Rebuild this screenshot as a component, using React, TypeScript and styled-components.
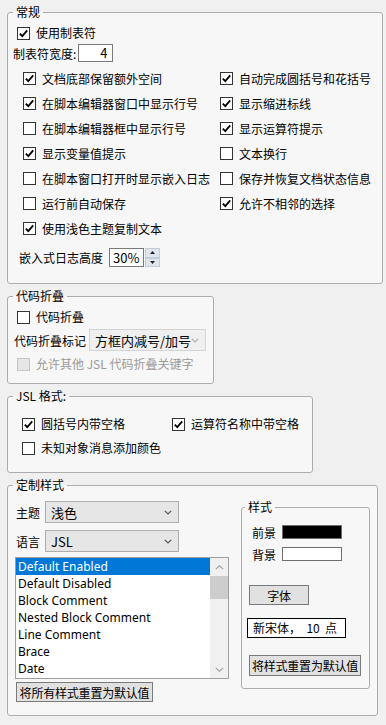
import React from 'react';
import styled, { createGlobalStyle } from 'styled-components';

const GlobalStyle = createGlobalStyle`
  html, body {
    margin: 0;
    padding: 0;
    background: #f0f0f0;
  }
  body {
    font-family: "Noto Sans CJK SC", "Noto Sans", sans-serif;
    font-size: 12px;
    color: #000;
  }
  #root {
    width: 386px;
    height: 725px;
    overflow: hidden;
  }
`;

const Page = styled.div`
  padding-top: 4px;
  display: flex;
  flex-direction: column;
  align-items: flex-start;
`;

const Group = styled.fieldset<{ $width: number; $left?: number; $top?: number }>`
  box-sizing: border-box;
  width: ${p => p.$width}px;
  min-width: 0;
  margin: ${p => p.$top ?? 4}px 0 0 ${p => p.$left ?? 7}px;
  padding: 0;
  border: 1px solid #adadad;
  border-radius: 3px;
  background: #f7f7f7;
`;

const Legend = styled.legend<{ $left?: number }>`
  margin-left: ${p => p.$left ?? 5}px;
  padding: 0 3px;
  font-size: 12px;
  line-height: 16px;
`;

const Body = styled.div<{ $pt: number; $pb: number }>`
  padding: ${p => p.$pt}px 0 ${p => p.$pb}px 0;
  display: flex;
  flex-direction: column;
  align-items: flex-start;
`;

const Row = styled.div<{ $ml?: number; $mt?: number; $gap?: number; $h?: number }>`
  display: flex;
  align-items: center;
  margin-left: ${p => p.$ml ?? 0}px;
  margin-top: ${p => p.$mt ?? 0}px;
  gap: ${p => p.$gap ?? 0}px;
  height: ${p => (p.$h ? `${p.$h}px` : 'auto')};
  white-space: nowrap;
`;

const OptionGrid = styled.div<{ $ml: number; $mt: number; $col: number; $row: number }>`
  display: grid;
  grid-template-columns: ${p => p.$col}px auto;
  grid-auto-rows: ${p => p.$row}px;
  align-items: center;
  margin-left: ${p => p.$ml}px;
  margin-top: ${p => p.$mt}px;
`;

const CheckLabel = styled.label<{ $disabled?: boolean }>`
  display: flex;
  align-items: center;
  gap: 6px;
  height: 16px;
  line-height: 16px;
  white-space: nowrap;
  color: ${p => (p.$disabled ? '#9a9a9a' : '#000')};
`;

const Box = styled.span<{ $disabled?: boolean }>`
  box-sizing: border-box;
  width: 13px;
  height: 13px;
  flex: none;
  border: 1px solid ${p => (p.$disabled ? '#c4c4c4' : '#333')};
  background: ${p => (p.$disabled ? '#e6e6e6' : '#fff')};
  display: flex;
  align-items: center;
  justify-content: center;
`;

const TextField = styled.div<{ $w: number; $h: number; $align?: string }>`
  box-sizing: border-box;
  width: ${p => p.$w}px;
  height: ${p => p.$h}px;
  border: 1px solid #7a7a7a;
  background: #fff;
  line-height: ${p => p.$h - 2}px;
  padding: 0 5px 0 3px;
  text-align: ${p => p.$align ?? 'left'};
  font-size: 13px;
`;

const Spin = styled.div`
  display: flex;
  flex-direction: column;
  width: 15px;
  height: 19px;
  margin-left: 1px;
`;

const SpinButton = styled.div`
  flex: 1;
  box-sizing: border-box;
  border: 1px solid #c3cdd8;
  background: #dfe6ee;
  display: flex;
  align-items: center;
  justify-content: center;
`;

const Select = styled.div<{ $w: number; $disabled?: boolean }>`
  box-sizing: border-box;
  width: ${p => p.$w}px;
  height: 22px;
  border: 1px solid ${p => (p.$disabled ? '#d4d4d4' : '#adadad')};
  background: ${p => (p.$disabled ? '#efefef' : '#e6e6e6')};
  display: flex;
  align-items: center;
  justify-content: space-between;
  padding: 0 6px 0 5px;
  font-size: 13px;
`;

const ListBox = styled.div`
  box-sizing: border-box;
  width: 214px;
  height: 122px;
  margin-top: 5px;
  border: 1px solid #a0a0a0;
  background: #fff;
  display: flex;
  overflow: hidden;
`;

const Items = styled.div`
  flex: 1;
  overflow: hidden;
`;

const Item = styled.div<{ $selected?: boolean }>`
  height: 17px;
  line-height: 17px;
  padding-left: 2px;
  font-family: "Noto Sans", "Open Sans", sans-serif;
  font-size: 12px;
  white-space: nowrap;
  background: ${p => (p.$selected ? '#0078d7' : 'transparent')};
  color: ${p => (p.$selected ? '#fff' : '#000')};
`;

const ScrollBar = styled.div`
  width: 18px;
  background: #f0f0f0;
  display: flex;
  flex-direction: column;
`;

const ScrollArrow = styled.div`
  height: 18px;
  display: flex;
  align-items: center;
  justify-content: center;
`;

const Thumb = styled.div`
  height: 23px;
  background: #cdcdcd;
`;

const Track = styled.div`
  flex: 1;
`;

const Button = styled.div<{ $w: number; $h?: number; $ml?: number; $mt?: number }>`
  box-sizing: border-box;
  width: ${p => p.$w}px;
  height: ${p => p.$h ?? 20}px;
  margin-left: ${p => p.$ml ?? 0}px;
  margin-top: ${p => p.$mt ?? 0}px;
  border: 1px solid #7a7a7a;
  background: #e1e1e1;
  display: flex;
  align-items: center;
  justify-content: center;
  white-space: nowrap;
  letter-spacing: -0.2px;
`;

const Swatch = styled.div<{ $color: string }>`
  box-sizing: border-box;
  width: 60px;
  height: 14px;
  border: 1px solid #6e6e6e;
  background: ${p => p.$color};
`;

const FontBox = styled.div`
  box-sizing: border-box;
  width: 99px;
  height: 20px;
  margin: 13px 0 0 5px;
  border: 1px solid #000;
  background: #fff;
  line-height: 18px;
  padding-left: 5px;
  white-space: pre;
`;

const Columns = styled.div`
  display: flex;
  align-items: flex-start;
`;

const LeftColumn = styled.div`
  display: flex;
  flex-direction: column;
  align-items: flex-start;
  margin-left: 7px;
  padding: 8px 0 13px;
  width: 214px;
`;

const Check = ({ label, checked, disabled }: { label: string; checked?: boolean; disabled?: boolean }) => (
  <CheckLabel $disabled={disabled}>
    <Box $disabled={disabled}>
      {checked && (
        <svg width="11" height="11" viewBox="0 0 11 11">
          <path d="M1.8 5.6 L4.3 8.2 L9.2 2.4" fill="none" stroke="#000" strokeWidth="1.8" />
        </svg>
      )}
    </Box>
    {label}
  </CheckLabel>
);

const Chevron = ({ color }: { color: string }) => (
  <svg width="8" height="5" viewBox="0 0 8 5">
    <path d="M0.8 0.8 L4 4 L7.2 0.8" fill="none" stroke={color} strokeWidth="1.2" />
  </svg>
);

const Triangle = ({ up }: { up?: boolean }) => (
  <svg width="5" height="3" viewBox="0 0 5 3">
    <path d={up ? 'M0 3 L2.5 0 L5 3 Z' : 'M0 0 L2.5 3 L5 0 Z'} fill="#222" />
  </svg>
);

const editorOptions: [string, boolean, string, boolean][] = [
  ['文档底部保留额外空间', true, '自动完成圆括号和花括号', true],
  ['在脚本编辑器窗口中显示行号', true, '显示缩进标线', true],
  ['在脚本编辑器框中显示行号', false, '显示运算符提示', true],
  ['显示变量值提示', true, '文本换行', false],
  ['在脚本窗口打开时显示嵌入日志', false, '保存并恢复文档状态信息', false],
  ['运行前自动保存', false, '允许不相邻的选择', true],
];

const styleItems = [
  'Default Enabled',
  'Default Disabled',
  'Block Comment',
  'Nested Block Comment',
  'Line Comment',
  'Brace',
  'Date',
];

export default function App() {
  return (
    <Page>
      <GlobalStyle />

      <Group $width={376} $top={0}>
        <Legend>常规</Legend>
        <Body $pt={5} $pb={16}>
          <Row $ml={9}>
            <Check label="使用制表符" checked />
          </Row>
          <Row $ml={5} $mt={3} $gap={2}>
            制表符宽度:
            <TextField $w={35} $h={18} $align="right">4</TextField>
          </Row>
          <OptionGrid $ml={15} $mt={4} $col={197} $row={25}>
            {editorOptions.map(([a, ac, b, bc]) => (
              <React.Fragment key={a}>
                <Check label={a} checked={ac} />
                <Check label={b} checked={bc} />
              </React.Fragment>
            ))}
            <Check label="使用浅色主题复制文本" checked />
          </OptionGrid>
          <Row $ml={11} $mt={7} $gap={6}>
            嵌入式日志高度
            <Row>
              <TextField $w={35} $h={19}>30%</TextField>
              <Spin>
                <SpinButton><Triangle up /></SpinButton>
                <SpinButton><Triangle /></SpinButton>
              </Spin>
            </Row>
          </Row>
        </Body>
      </Group>

      <Group $width={207}>
        <Legend>代码折叠</Legend>
        <Body $pt={5} $pb={11}>
          <Row $ml={9}>
            <Check label="代码折叠" />
          </Row>
          <Row $ml={6} $mt={4} $gap={3}>
            代码折叠标记
            <Select $w={117} $disabled>
              方框内减号/加号
              <Chevron color="#b0b0b0" />
            </Select>
          </Row>
          <Row $ml={9} $mt={5}>
            <Check label="允许其他 JSL 代码折叠关键字" disabled />
          </Row>
        </Body>
      </Group>

      <Group $width={306}>
        <Legend>JSL 格式:</Legend>
        <Body $pt={8} $pb={12}>
          <OptionGrid $ml={14} $mt={0} $col={150} $row={24}>
            <Check label="圆括号内带空格" checked />
            <Check label="运算符名称中带空格" checked />
            <Check label="未知对象消息添加颜色" />
          </OptionGrid>
        </Body>
      </Group>

      <Group $width={371}>
        <Legend>定制样式</Legend>
        <Columns>
          <LeftColumn>
            <Row $ml={1} $gap={5}>
              主题
              <Select $w={134}>
                浅色
                <Chevron color="#555" />
              </Select>
            </Row>
            <Row $ml={1} $mt={7} $gap={5}>
              语言
              <Select $w={134}>
                JSL
                <Chevron color="#555" />
              </Select>
            </Row>
            <ListBox>
              <Items>
                {styleItems.map((s, i) => (
                  <Item key={s} $selected={i === 0}>{s}</Item>
                ))}
              </Items>
              <ScrollBar>
                <ScrollArrow>
                  <svg width="9" height="5" viewBox="0 0 9 5">
                    <path d="M0.8 4.2 L4.5 0.8 L8.2 4.2" fill="none" stroke="#a0a0a0" strokeWidth="1.1" />
                  </svg>
                </ScrollArrow>
                <Thumb />
                <Track />
                <ScrollArrow>
                  <svg width="9" height="5" viewBox="0 0 9 5">
                    <path d="M0.8 0.8 L4.5 4.2 L8.2 0.8" fill="none" stroke="#a0a0a0" strokeWidth="1.1" />
                  </svg>
                </ScrollArrow>
              </ScrollBar>
            </ListBox>
            <Button $w={137} $ml={1} $mt={3}>将所有样式重置为默认值</Button>
          </LeftColumn>

          <Group $width={129} $left={12} $top={6}>
            <Legend $left={3}>样式</Legend>
            <Body $pt={9} $pb={12}>
              <Row $ml={10} $gap={6} $h={16}>
                前景
                <Swatch $color="#000" />
              </Row>
              <Row $ml={10} $mt={6} $gap={6} $h={16}>
                背景
                <Swatch $color="#fff" />
              </Row>
              <Button $w={60} $ml={7} $mt={23}>字体</Button>
              <FontBox>新宋体，  10  点</FontBox>
              <Button $w={112} $h={21} $ml={7} $mt={17}>将样式重置为默认值</Button>
            </Body>
          </Group>
        </Columns>
      </Group>
    </Page>
  );
}
